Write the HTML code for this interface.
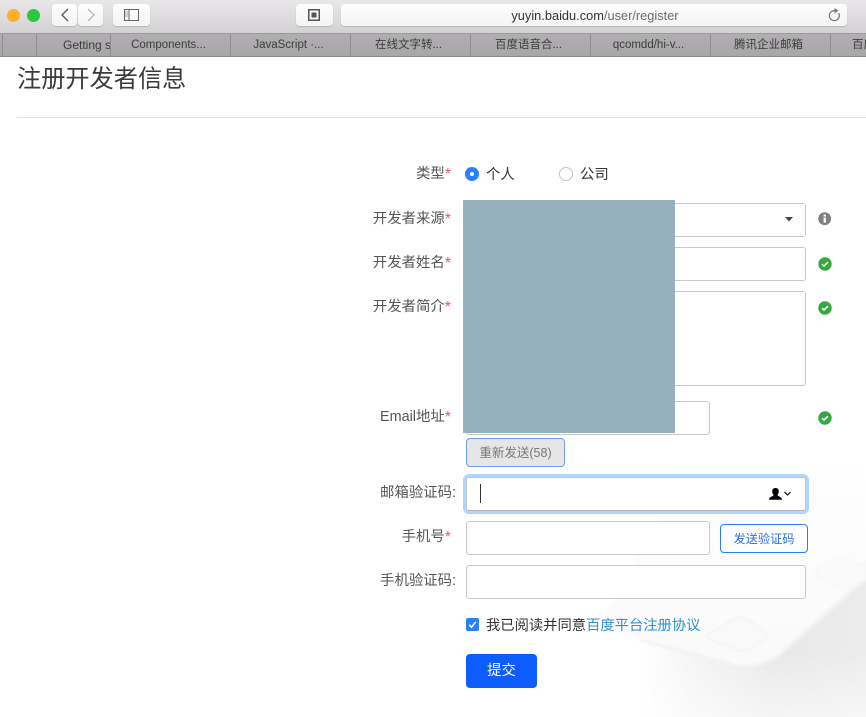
<!DOCTYPE html>
<html lang="zh">
<head>
<meta charset="utf-8">
<title>注册开发者信息</title>
<style>
*{box-sizing:border-box}
html,body{margin:0;padding:0}
body{width:866px;height:717px;position:relative;overflow:hidden;background:#fff;font-family:"Liberation Sans","Noto Sans CJK SC",sans-serif;color:#333}
.a{position:absolute}
.toolbar{left:0;top:0;width:866px;height:33px;background:linear-gradient(#e9e7e9,#d3d1d3)}
.tb{position:absolute;background:linear-gradient(#fdfdfd,#f4f4f4);border-radius:4px;box-shadow:0 1px 1px rgba(0,0,0,.15)}
.tabs{left:0;top:33px;width:866px;height:24px;background:linear-gradient(#b0aeb0,#a8a6a8);border-top:1px solid #9c9a9c;border-bottom:1px solid #8f8d8f}
.tab{position:absolute;top:0;height:22px;line-height:23px;font-size:11.5px;color:#3c3c3c;text-align:center;padding-right:4px;border-left:1px solid #8f8d8f;white-space:nowrap;overflow:hidden}
.lab{position:absolute;right:415px;font-size:14.4px;line-height:20px;color:#555;white-space:nowrap;margin-top:1px}
.lab i{font-style:normal;color:#f5525c;font-size:16px;line-height:0;position:relative;top:1px}
.inp{position:absolute;background:#fff;border:1px solid #c8c8c8;border-radius:3px}
.ok{position:absolute;left:818px;width:14px;height:14px}
</style>
</head>
<body>
<svg class="a" style="left:0;top:0" width="866" height="717" viewBox="0 0 866 717">
<defs>
<linearGradient id="s" x1="638" y1="0" x2="866" y2="0" gradientUnits="userSpaceOnUse"><stop offset="0" stop-color="#fff"/><stop offset=".25" stop-color="#f4f4f4"/><stop offset=".6" stop-color="#e8e8e8"/><stop offset="1" stop-color="#ececec"/></linearGradient>
<linearGradient id="v" x1="0" y1="650" x2="0" y2="717" gradientUnits="userSpaceOnUse"><stop offset="0" stop-color="#fff" stop-opacity="0"/><stop offset="1" stop-color="#fff" stop-opacity=".55"/></linearGradient>
<linearGradient id="t" x1="0" y1="440" x2="0" y2="640" gradientUnits="userSpaceOnUse"><stop offset="0" stop-color="#fff"/><stop offset="1" stop-color="#fafafa"/></linearGradient>
<filter id="b" x="-10%" y="-10%" width="120%" height="120%"><feGaussianBlur stdDeviation="1"/></filter>
</defs>
<path d="M638 632 L740 640 L866 560 V717 H638Z" fill="url(#s)"/>
<path d="M638 650 H866 V717 H638Z" fill="url(#v)"/>
<path d="M600 625 L730 664 Q755 672 780 654 L866 578 V440 H700Z" fill="url(#t)" filter="url(#b)"/>
<path d="M640 640 L730 664 Q755 672 780 654 L866 578" fill="none" stroke="#f3f3f3" stroke-width="3" filter="url(#b)"/>
<path d="M707 635 L736 618 Q740 616 745 618 L766 632 Q769 635 765 638 L750 650 Q745 652 740 651 L710 640 Q705 637 707 635Z" fill="#f9f9f9" stroke="#f0f0f0" filter="url(#b)"/>
<path d="M815 570 L840 556 L866 566 V580 L845 590 L818 578Z" fill="#fafafa" stroke="#f4f4f4" filter="url(#b)"/>
</svg>

<div class="a toolbar"></div>
<div class="a" style="left:7px;top:9px;width:13px;height:13px;border-radius:50%;background:#feb127"></div>
<div class="a" style="left:27px;top:9px;width:13px;height:13px;border-radius:50%;background:#2ac83c"></div>
<div class="tb" style="left:52px;top:4px;width:25px;height:22px"></div>
<div class="tb" style="left:78px;top:4px;width:25px;height:22px"></div>
<svg class="a" style="left:52px;top:4px" width="51" height="22"><path d="M16 5 L10 11 L16 17" fill="none" stroke="#555" stroke-width="1.3"/><path d="M36 5 L42 11 L36 17" fill="none" stroke="#b5b5b5" stroke-width="1.3"/></svg>
<div class="tb" style="left:113px;top:4px;width:37px;height:22px"></div>
<svg class="a" style="left:124px;top:9px" width="16" height="12"><rect x=".5" y=".5" width="14" height="11" fill="none" stroke="#666"/><path d="M5 1V11" stroke="#666"/><path d="M1 3H4M1 5H4M1 7H4" stroke="#aaa"/></svg>
<div class="tb" style="left:296px;top:4px;width:37px;height:22px"></div>
<svg class="a" style="left:308px;top:9px" width="13" height="12"><rect x=".75" y=".75" width="10.5" height="10.5" fill="none" stroke="#555" stroke-width="1.5"/><rect x="3.5" y="3.5" width="5" height="5" fill="#555"/></svg>
<div class="tb" style="left:341px;top:4px;width:506px;height:22px"></div>
<div class="a" style="left:425px;top:4px;width:340px;height:22px;line-height:24px;text-align:center;font-size:12.8px;color:#333;white-space:nowrap">yuyin.baidu.com<span style="color:#6b6b6b">/user/register</span></div>
<svg class="a" style="left:827px;top:7px" width="15" height="16"><path d="M11.6 6 A5 5 0 1 1 7.5 3.6" fill="none" stroke="#777" stroke-width="1.2"/><path d="M7.5 1 L11.5 3.7 L7.5 6.2Z" fill="#777"/></svg>

<div class="a tabs">
<div class="tab" style="left:2px;width:34px"></div>
<div class="tab" style="left:36px;width:74px;padding:0 0 0 26px;text-align:left;font-size:12px">Getting s</div>
<div class="tab" style="left:110px;width:120px">Components...</div>
<div class="tab" style="left:230px;width:120px">JavaScript ·...</div>
<div class="tab" style="left:350px;width:120px">在线文字转...</div>
<div class="tab" style="left:470px;width:120px">百度语音合...</div>
<div class="tab" style="left:590px;width:120px">qcomdd/hi-v...</div>
<div class="tab" style="left:710px;width:120px">腾讯企业邮箱</div>
<div class="tab" style="left:830px;width:36px;padding:0 0 0 21px;text-align:left">百度</div>
</div>

<div class="a" style="left:17px;top:63px;font-size:24.2px;line-height:34px;color:#3a3a3a;white-space:nowrap">注册开发者信息</div>
<div class="a" style="left:17px;top:117px;width:849px;height:1px;background:#e5e5e5"></div>

<div class="lab" style="top:163px">类型<i>*</i></div>
<div class="lab" style="top:208px">开发者来源<i>*</i></div>
<div class="lab" style="top:252px">开发者姓名<i>*</i></div>
<div class="lab" style="top:296px">开发者简介<i>*</i></div>
<div class="lab" style="top:406px">Email地址<i>*</i></div>
<div class="lab" style="top:482px;right:410px">邮箱验证码:</div>
<div class="lab" style="top:526px">手机号<i>*</i></div>
<div class="lab" style="top:570px;right:410px">手机验证码:</div>

<div class="a" style="left:465px;top:167px;width:14px;height:14px;border-radius:50%;background:#2b7fff"></div>
<div class="a" style="left:470px;top:172px;width:4px;height:4px;border-radius:50%;background:#fff"></div>
<div class="a" style="left:486px;top:165px;font-size:14.4px;line-height:20px">个人</div>
<div class="a" style="left:559px;top:167px;width:14px;height:14px;border-radius:50%;background:#fff;border:1px solid #c4c4c4"></div>
<div class="a" style="left:580px;top:165px;font-size:14.4px;line-height:20px">公司</div>

<div class="inp" style="left:466px;top:203px;width:340px;height:34px"></div>
<svg class="a" style="left:785px;top:217px" width="9" height="6"><path d="M0 0H8L4 4.5Z" fill="#444"/></svg>
<div class="inp" style="left:466px;top:247px;width:340px;height:34px"></div>
<div class="inp" style="left:466px;top:291px;width:340px;height:95px"></div>
<div class="inp" style="left:466px;top:401px;width:244px;height:34px"></div>

<div class="a" style="left:463px;top:200px;width:212px;height:233px;background:#96b0be"></div>

<svg class="ok" style="top:212px" viewBox="0 0 14 14"><circle cx="6.7" cy="6.7" r="6.4" fill="#808080"/><rect x="5.6" y="5.6" width="2.3" height="5" fill="#fff"/><rect x="5.6" y="2.6" width="2.3" height="2" fill="#fff"/></svg>
<svg class="ok" style="top:256.5px" viewBox="0 0 14 14"><circle cx="7" cy="7" r="6.7" fill="#36a93c"/><path d="M4 7.2 L6 9 L10 5.2" fill="none" stroke="#fff" stroke-width="1.6"/></svg>
<svg class="ok" style="top:300.5px" viewBox="0 0 14 14"><circle cx="7" cy="7" r="6.7" fill="#36a93c"/><path d="M4 7.2 L6 9 L10 5.2" fill="none" stroke="#fff" stroke-width="1.6"/></svg>
<svg class="ok" style="top:410.5px" viewBox="0 0 14 14"><circle cx="7" cy="7" r="6.7" fill="#36a93c"/><path d="M4 7.2 L6 9 L10 5.2" fill="none" stroke="#fff" stroke-width="1.6"/></svg>

<div class="a" style="left:466px;top:438px;width:99px;height:29px;background:#e6e6e6;border:1px solid #6f9cf0;border-radius:4px;font-size:12.5px;line-height:28px;color:#777;text-align:center;white-space:nowrap">重新发送(58)</div>

<div class="a" style="left:466px;top:477px;width:340px;height:34px;background:#fff;border:1px solid #c0c6ce;border-bottom-color:#b5b5b5;border-radius:3px;box-shadow:0 0 0 3px #b3d4fc"></div>
<div class="a" style="left:480px;top:484px;width:1px;height:19px;background:#333"></div>
<svg class="a" style="left:768px;top:487px" width="26" height="14"><path d="M7.5 1C10.4 1 11 3.2 10.7 5.2C10.5 6.6 9.8 7.4 9.4 8C9.6 9 11 9.4 12.6 10.2C13.6 10.7 14 11.5 14 12.8H1C1 11.5 1.4 10.7 2.4 10.2C4 9.4 5.4 9 5.6 8C5.2 7.4 4.5 6.6 4.3 5.2C4 3.2 4.6 1 7.5 1Z" fill="#000"/><path d="M16.5 5 L19.5 8 L22.5 5" fill="none" stroke="#222" stroke-width="1.3"/></svg>

<div class="inp" style="left:466px;top:521px;width:244px;height:34px"></div>
<div class="a" style="left:720px;top:524px;width:88px;height:29px;background:#fff;border:1px solid #2b7fff;border-radius:4px;font-size:12.2px;line-height:28px;color:#2b6fe8;text-align:center;white-space:nowrap">发送验证码</div>
<div class="inp" style="left:466px;top:565px;width:340px;height:34px"></div>

<div class="a" style="left:466px;top:618px;width:13px;height:13px;border-radius:2px;background:#2b7fff"></div>
<svg class="a" style="left:466px;top:618px" width="13" height="13"><path d="M3.2 6.8 L5.5 9.2 L9.8 3.8" fill="none" stroke="#fff" stroke-width="1.5"/></svg>
<div class="a" style="left:486px;top:616px;font-size:14.3px;line-height:20px;white-space:nowrap;color:#333">我已阅读并同意<span style="color:#2f8fc9">百度平台注册协议</span></div>

<div class="a" style="left:466px;top:654px;width:71px;height:34px;background:#0d5cff;border-radius:4px;color:#fff;font-size:14.4px;line-height:35px;text-align:center">提交</div>
</body>
</html>
